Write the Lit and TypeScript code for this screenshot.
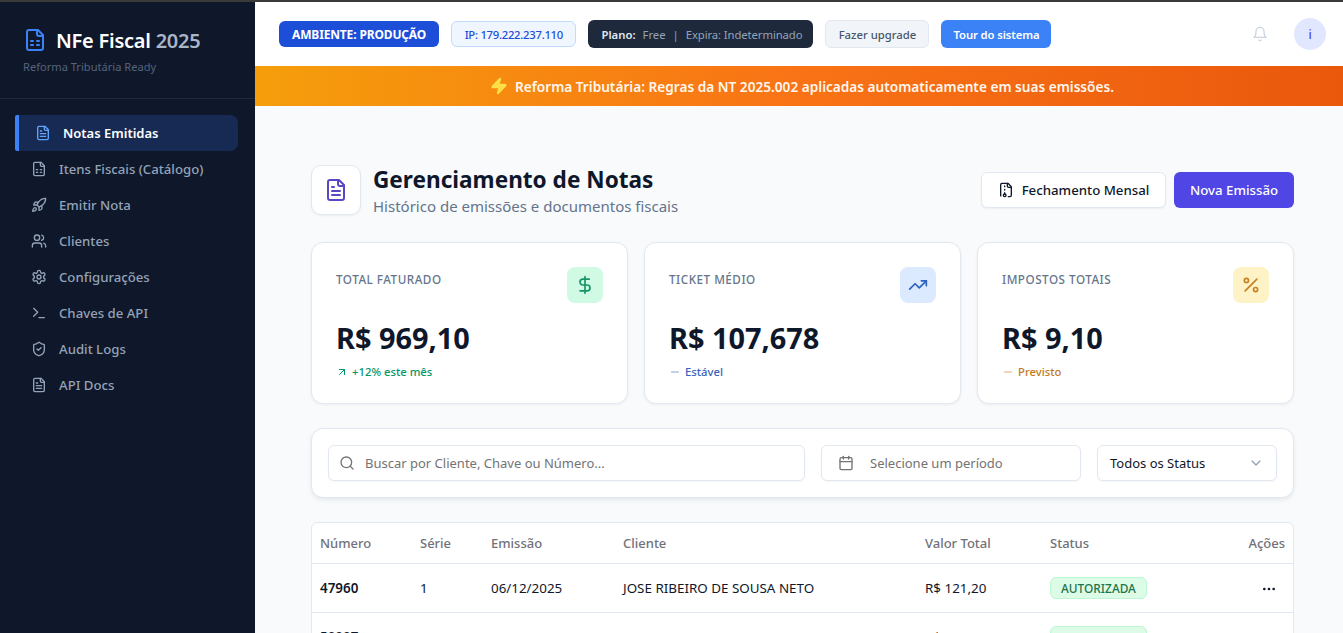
import {LitElement, css, html, svg} from 'lit';
import {customElement} from 'lit/decorators.js';

const FILE = svg`<path d="M15 2H6a2 2 0 0 0-2 2v16a2 2 0 0 0 2 2h12a2 2 0 0 0 2-2V7Z"/><path d="M14 2v4a2 2 0 0 0 2 2h4"/>`;

const ICONS = {
  fileText: svg`${FILE}<path d="M10 9H8"/><path d="M16 13H8"/><path d="M16 17H8"/>`,
  fileGrid: svg`${FILE}<path d="M8 13h2"/><path d="M14 13h2"/><path d="M8 17h2"/><path d="M14 17h2"/>`,
  fileArchive: svg`<path d="M10 12v-1"/><path d="M10 18v-2"/><path d="M10 7V6"/><path d="M14 2v4a2 2 0 0 0 2 2h4"/><path d="M15.5 22H18a2 2 0 0 0 2-2V7l-5-5H6a2 2 0 0 0-2 2v16a2 2 0 0 0 .274 1.01"/><circle cx="10" cy="20" r="2"/>`,
  rocket: svg`<path d="M4.5 16.5c-1.5 1.26-2 5-2 5s3.74-.5 5-2c.71-.84.7-2.13-.09-2.91a2.18 2.18 0 0 0-2.91-.09z"/><path d="m12 15-3-3a22 22 0 0 1 2-3.95A12.88 12.88 0 0 1 22 2c0 2.72-.78 7.5-6 11a22.35 22.35 0 0 1-4 2z"/><path d="M9 12H4s.55-3.03 2-4c1.62-1.08 5 0 5 0"/><path d="M12 15v5s3.03-.55 4-2c1.08-1.62 0-5 0-5"/>`,
  users: svg`<path d="M16 21v-2a4 4 0 0 0-4-4H6a4 4 0 0 0-4 4v2"/><circle cx="9" cy="7" r="4"/><path d="M22 21v-2a4 4 0 0 0-3-3.87"/><path d="M16 3.13a4 4 0 0 1 0 7.75"/>`,
  settings: svg`<path d="M12.22 2h-.44a2 2 0 0 0-2 2v.18a2 2 0 0 1-1 1.73l-.43.25a2 2 0 0 1-2 0l-.15-.08a2 2 0 0 0-2.73.73l-.22.38a2 2 0 0 0 .73 2.73l.15.1a2 2 0 0 1 1 1.72v.51a2 2 0 0 1-1 1.74l-.15.09a2 2 0 0 0-.73 2.73l.22.38a2 2 0 0 0 2.73.73l.15-.08a2 2 0 0 1 2 0l.43.25a2 2 0 0 1 1 1.73V20a2 2 0 0 0 2 2h.44a2 2 0 0 0 2-2v-.18a2 2 0 0 1 1-1.73l.43-.25a2 2 0 0 1 2 0l.15.08a2 2 0 0 0 2.73-.73l.22-.39a2 2 0 0 0-.73-2.73l-.15-.08a2 2 0 0 1-1-1.74v-.5a2 2 0 0 1 1-1.74l.15-.09a2 2 0 0 0 .73-2.73l-.22-.38a2 2 0 0 0-2.73-.73l-.15.08a2 2 0 0 1-2 0l-.43-.25a2 2 0 0 1-1-1.73V4a2 2 0 0 0-2-2z"/><circle cx="12" cy="12" r="3"/>`,
  terminal: svg`<polyline points="4 17 10 11 4 5"/><line x1="12" x2="20" y1="19" y2="19"/>`,
  shield: svg`<path d="M20 13c0 5-3.5 7.5-7.66 8.95a1 1 0 0 1-.67-.01C7.5 20.5 4 18 4 13V6a1 1 0 0 1 1-1c2 0 4.5-1.2 6.24-2.72a1.17 1.17 0 0 1 1.52 0C14.51 3.81 17 5 19 5a1 1 0 0 1 1 1z"/><path d="m9 12 2 2 4-4"/>`,
  bell: svg`<path d="M6 8a6 6 0 0 1 12 0c0 7 3 9 3 9H3s3-2 3-9"/><path d="M10.3 21a1.94 1.94 0 0 0 3.4 0"/>`,
  dollar: svg`<line x1="12" x2="12" y1="2" y2="22"/><path d="M17 5H9.5a3.5 3.5 0 0 0 0 7h5a3.5 3.5 0 0 1 0 7H6"/>`,
  trending: svg`<polyline points="22 7 13.5 15.5 8.5 10.5 2 17"/><polyline points="16 7 22 7 22 13"/>`,
  percent: svg`<line x1="19" x2="5" y1="5" y2="19"/><circle cx="6.5" cy="6.5" r="2.5"/><circle cx="17.5" cy="17.5" r="2.5"/>`,
  arrowUpRight: svg`<path d="M7 7h10v10"/><path d="M7 17 17 7"/>`,
  minus: svg`<path d="M5 12h14"/>`,
  search: svg`<circle cx="11" cy="11" r="8"/><path d="m21 21-4.3-4.3"/>`,
  calendar: svg`<path d="M8 2v4"/><path d="M16 2v4"/><rect width="18" height="18" x="3" y="4" rx="2"/><path d="M3 10h18"/>`,
  chevron: svg`<path d="m6 9 6 6 6-6"/>`,
  dots: svg`<circle cx="12" cy="12" r="1"/><circle cx="19" cy="12" r="1"/><circle cx="5" cy="12" r="1"/>`,
  zap: svg`<path d="M4 14a1 1 0 0 1-.78-1.63l9.9-10.2a.5.5 0 0 1 .86.46l-1.92 6.02A1 1 0 0 0 13 10h7a1 1 0 0 1 .78 1.63l-9.9 10.2a.5.5 0 0 1-.86-.46l1.92-6.02A1 1 0 0 0 11 14z"/>`,
};

type IconName = keyof typeof ICONS;

const icon = (name: IconName, cls = '') => html`
  <svg class="icon ${cls}" viewBox="0 0 24 24" fill="none" stroke="currentColor"
    stroke-width="2" stroke-linecap="round" stroke-linejoin="round">${ICONS[name]}</svg>`;

const NAV: {label: string; icon: IconName; active?: boolean}[] = [
  {label: 'Notas Emitidas', icon: 'fileText', active: true},
  {label: 'Itens Fiscais (Catálogo)', icon: 'fileGrid'},
  {label: 'Emitir Nota', icon: 'rocket'},
  {label: 'Clientes', icon: 'users'},
  {label: 'Configurações', icon: 'settings'},
  {label: 'Chaves de API', icon: 'terminal'},
  {label: 'Audit Logs', icon: 'shield'},
  {label: 'API Docs', icon: 'fileText'},
];

const STATS: {label: string; value: string; note: string; icon: IconName; noteIcon: IconName; tone: string}[] = [
  {label: 'Total Faturado', value: 'R$ 969,10', note: '+12% este mês', icon: 'dollar', noteIcon: 'arrowUpRight', tone: 'green'},
  {label: 'Ticket Médio', value: 'R$ 107,678', note: 'Estável', icon: 'trending', noteIcon: 'minus', tone: 'blue'},
  {label: 'Impostos Totais', value: 'R$ 9,10', note: 'Previsto', icon: 'percent', noteIcon: 'minus', tone: 'amber'},
];

const ROWS = [
  {num: '47960', serie: '1', date: '06/12/2025', client: 'JOSE RIBEIRO DE SOUSA NETO', total: 'R$ 121,20'},
  {num: '50007', serie: '1', date: '06/12/2025', client: 'JOSE RIBEIRO DE SOUSA NETO', total: 'R$ 70,70'},
];

@customElement('app-root')
export class AppRoot extends LitElement {
  static styles = css`
    :host {
      display: block;
      height: 100vh;
      overflow: hidden;
      font-family: 'Noto Sans', sans-serif;
      color: #0f172a;
    }

    .icon {
      width: 16px;
      height: 16px;
      flex: none;
      display: block;
    }

    .strip {
      height: 2px;
      background: #3a3a3a;
    }

    .shell {
      display: flex;
      height: calc(100vh - 2px);
    }

    /* sidebar */
    .sidebar {
      width: 255px;
      flex: none;
      background: #0f172a;
    }

    .brand {
      height: 97px;
      box-sizing: border-box;
      padding: 26px 23px 0;
      border-bottom: 1px solid #1e293b;
    }

    .brand-row {
      display: flex;
      align-items: center;
      gap: 9px;
      height: 24px;
    }

    .brand-icon {
      width: 24px;
      height: 24px;
      color: #3b82f6;
    }

    .brand-name {
      font-size: 20px;
      font-weight: 600;
      letter-spacing: -0.25px;
      color: #fff;
      white-space: nowrap;
    }

    .brand-year {
      color: #a9b6c8;
    }

    .brand-sub {
      margin-top: 7px;
      font-size: 11.1px;
      color: #566379;
      white-space: nowrap;
    }

    .nav {
      display: flex;
      flex-direction: column;
      padding: 16px 17px 0 15px;
    }

    .nav-item {
      display: flex;
      align-items: center;
      gap: 12px;
      height: 36px;
      padding-left: 16px;
      font-size: 13.2px;
      font-weight: 500;
      color: #94a3b8;
    }

    .nav-item.active {
      border-left: 4px solid #3b82f6;
      border-radius: 2px 8px 8px 2px;
      background: #172a54;
      color: #fff;
      font-size: 13px;
      font-weight: 600;
    }

    .nav-item.active .icon {
      color: #60a5fa;
    }

    /* right column */
    .content {
      flex: 1;
      min-width: 0;
      display: flex;
      flex-direction: column;
      background: #f8fafc;
    }

    .topbar {
      flex: none;
      height: 64px;
      box-sizing: border-box;
      display: flex;
      align-items: center;
      gap: 12px;
      padding: 0 17px 0 24px;
      background: #fff;
    }

    .pill {
      display: flex;
      align-items: center;
      box-sizing: border-box;
      border-radius: 6px;
      font-size: 11.3px;
      white-space: nowrap;
    }

    .env {
      height: 26px;
      padding: 0 13px;
      background: #1d4ed8;
      color: #fff;
      font-size: 12px;
      font-weight: 700;
      letter-spacing: -0.15px;
    }

    .ip {
      height: 26px;
      padding: 0 12.5px;
      background: #eff6ff;
      border: 1px solid #bfdbfe;
      color: #1d4ed8;
      font-weight: 500;
      letter-spacing: -0.28px;
    }

    .plan {
      height: 28px;
      width: 225px;
      padding: 0 0 0 13px;
      gap: 7px;
      background: #1e293b;
      color: #94a3b8;
    }

    .plan b {
      color: #e2e8f0;
      font-weight: 600;
    }

    .plan-expiry {
      letter-spacing: -0.1px;
    }

    .upgrade {
      height: 28px;
      width: 104px;
      justify-content: center;
      background: #f1f5f9;
      border: 1px solid #e2e8f0;
      color: #475569;
      font-weight: 500;
    }

    .tour {
      height: 28px;
      width: 110px;
      justify-content: center;
      background: #3b82f6;
      color: #fff;
      font-weight: 600;
      letter-spacing: -0.12px;
    }

    .top-end {
      margin-left: auto;
      display: flex;
      align-items: center;
      gap: 26px;
    }

    .bell {
      color: #cbd5e1;
    }

    .avatar {
      width: 32px;
      height: 32px;
      border-radius: 50%;
      display: flex;
      align-items: center;
      justify-content: center;
      background: #e0e7ff;
      color: #4f46e5;
      font-size: 12px;
      font-weight: 500;
    }

    .banner {
      flex: none;
      height: 40px;
      box-sizing: border-box;
      padding-left: 6px;
      display: flex;
      align-items: center;
      justify-content: center;
      gap: 7px;
      background: linear-gradient(90deg, #f59e0b, #f97316 50%, #ea580c);
      color: #fff7ed;
      font-size: 13.65px;
      font-weight: 600;
    }

    .banner .icon {
      width: 18px;
      height: 18px;
      color: #fde047;
      fill: #fde047;
    }

    .main {
      flex: 1;
      min-height: 0;
      overflow: hidden;
      padding: 59px 49px 0 56px;
    }

    .page-head {
      display: flex;
      justify-content: space-between;
      align-items: center;
      height: 50px;
    }

    .page-title {
      display: flex;
      align-items: flex-start;
      gap: 12px;
      height: 50px;
    }

    .title-icon {
      width: 50px;
      height: 50px;
      box-sizing: border-box;
      display: flex;
      align-items: center;
      justify-content: center;
      background: #fff;
      border: 1px solid #e2e8f0;
      border-radius: 10px;
      box-shadow: 0 1px 2px rgba(15, 23, 42, 0.05);
      color: #5b46c4;
    }

    .title-icon .icon {
      width: 24px;
      height: 24px;
    }

    .title-text {
      padding-top: 1px;
    }

    h1 {
      margin: 0;
      font-size: 22.6px;
      line-height: 28px;
      font-weight: 700;
      color: #0f172a;
      white-space: nowrap;
    }

    .subtitle {
      margin-top: 2px;
      font-size: 15px;
      line-height: 20px;
      color: #64748b;
      white-space: nowrap;
    }

    .head-actions {
      display: flex;
      gap: 8px;
    }

    .btn {
      display: flex;
      align-items: center;
      justify-content: center;
      gap: 8px;
      box-sizing: border-box;
      height: 36px;
      border-radius: 6px;
      font-size: 13.25px;
      font-weight: 500;
      white-space: nowrap;
    }

    .btn-light {
      width: 185px;
      background: #fff;
      border: 1px solid #e2e8f0;
      box-shadow: 0 1px 2px rgba(15, 23, 42, 0.05);
      color: #0f172a;
    }

    .btn-primary {
      width: 120px;
      background: #4f46e5;
      color: #fff;
    }

    .stats {
      display: grid;
      grid-template-columns: repeat(3, 1fr);
      gap: 16px;
      margin-top: 27px;
    }

    .stat {
      height: 162px;
      box-sizing: border-box;
      padding: 24px;
      background: #fff;
      border: 1px solid #e2e8f0;
      border-radius: 12px;
      box-shadow: 0 1px 3px rgba(15, 23, 42, 0.06);
    }

    .stat-top {
      display: flex;
      justify-content: space-between;
      align-items: flex-start;
    }

    .stat-label {
      margin-top: 3px;
      font-size: 11.7px;
      line-height: 18px;
      font-weight: 500;
      letter-spacing: 0.5px;
      text-transform: uppercase;
      color: #64748b;
    }

    .stat-icon {
      width: 36px;
      height: 36px;
      border-radius: 8px;
      display: flex;
      align-items: center;
      justify-content: center;
    }

    .stat-icon .icon {
      width: 20px;
      height: 20px;
    }

    .stat-value {
      margin-top: 15px;
      font-size: 28.9px;
      line-height: 40px;
      font-weight: 700;
      color: #0f172a;
      white-space: nowrap;
    }

    .stat-note {
      display: flex;
      align-items: center;
      gap: 4px;
      margin-top: 5px;
      font-size: 11.3px;
      line-height: 18px;
      font-weight: 500;
    }

    .stat-note .icon {
      width: 12px;
      height: 12px;
    }

    .green .stat-icon { background: #d1fae5; color: #149467; }
    .green .stat-note { color: #059669; }
    .blue .stat-icon { background: #dbeafe; color: #2f62c0; }
    .blue .stat-note { color: #3a63b8; }
    .amber .stat-icon { background: #fef3c7; color: #c97f1f; }
    .amber .stat-note { color: #c47a1e; }

    .blue .stat-note .icon,
    .amber .stat-note .icon {
      opacity: 0.6;
    }

    .filters {
      display: flex;
      gap: 16px;
      margin-top: 24px;
      padding: 16px;
      background: #fff;
      border: 1px solid #e2e8f0;
      border-radius: 12px;
      box-shadow: 0 2px 4px rgba(15, 23, 42, 0.08);
    }

    .field {
      display: flex;
      align-items: center;
      box-sizing: border-box;
      height: 36px;
      background: #fff;
      border: 1px solid #e2e8f0;
      border-radius: 6px;
      box-shadow: 0 1px 2px rgba(15, 23, 42, 0.04);
      font-size: 13px;
      color: #737373;
      white-space: nowrap;
    }

    .field-search {
      flex: 1;
      gap: 10px;
      padding-left: 10px;
    }

    .field-date {
      width: 260px;
      flex: none;
      gap: 16px;
      padding-left: 16px;
    }

    .field-select {
      width: 180px;
      flex: none;
      justify-content: space-between;
      padding: 0 12px;
      color: #0f172a;
    }

    .field-select .icon {
      color: #94a3b8;
    }

    .table-wrap {
      margin-top: 24px;
      background: #fff;
      border: 1px solid #e2e8f0;
      border-radius: 6px;
    }

    table {
      width: 100%;
      table-layout: fixed;
      border-collapse: collapse;
      font-size: 13.4px;
    }

    th,
    td {
      box-sizing: border-box;
      padding: 0 8px;
      border-bottom: 1px solid #e2e8f0;
    }

    th {
      height: 40px;
      text-align: left;
      font-size: 13px;
      font-weight: 500;
      color: #71717a;
    }

    td {
      height: 49px;
      color: #0f172a;
      white-space: nowrap;
    }

    .c-num { width: 100px; }
    .c-serie { width: 71px; }
    .c-date { width: 132px; }
    .c-client { width: 302px; }
    .c-total { width: 125px; }
    .c-actions { width: 60px; }

    .num {
      font-weight: 600;
    }

    .right {
      text-align: right;
    }

    .badge {
      display: inline-block;
      box-sizing: border-box;
      height: 22px;
      padding: 0 10px;
      line-height: 20px;
      font-size: 11.9px;
      font-weight: 500;
      color: #22734a;
      background: #dcfce7;
      border: 1px solid #bbf7d0;
      border-radius: 6px;
    }

    .more {
      display: inline-block;
      margin-right: 8px;
      vertical-align: middle;
    }
  `;

  render() {
    return html`
      <div class="strip"></div>
      <div class="shell">
        <aside class="sidebar">
          <div class="brand">
            <div class="brand-row">
              ${icon('fileGrid', 'brand-icon')}
              <span class="brand-name">NFe Fiscal <span class="brand-year">2025</span></span>
            </div>
            <div class="brand-sub">Reforma Tributária Ready</div>
          </div>
          <nav class="nav">
            ${NAV.map((item) => html`
              <div class="nav-item ${item.active ? 'active' : ''}">
                ${icon(item.icon)}<span>${item.label}</span>
              </div>
            `)}
          </nav>
        </aside>

        <div class="content">
          <header class="topbar">
            <div class="pill env">AMBIENTE: PRODUÇÃO</div>
            <div class="pill ip">IP: 179.222.237.110</div>
            <div class="pill plan"><b>Plano:</b><span>Free</span><span>|</span><span class="plan-expiry">Expira: Indeterminado</span></div>
            <div class="pill upgrade">Fazer upgrade</div>
            <div class="pill tour">Tour do sistema</div>
            <div class="top-end">
              ${icon('bell', 'bell')}
              <div class="avatar">i</div>
            </div>
          </header>

          <div class="banner">
            ${icon('zap')}
            <span>Reforma Tributária: Regras da NT 2025.002 aplicadas automaticamente em suas emissões.</span>
          </div>

          <main class="main">
            <section class="page-head">
              <div class="page-title">
                <div class="title-icon">${icon('fileText')}</div>
                <div class="title-text">
                  <h1>Gerenciamento de Notas</h1>
                  <div class="subtitle">Histórico de emissões e documentos fiscais</div>
                </div>
              </div>
              <div class="head-actions">
                <div class="btn btn-light">${icon('fileArchive')}Fechamento Mensal</div>
                <div class="btn btn-primary">Nova Emissão</div>
              </div>
            </section>

            <section class="stats">
              ${STATS.map((s) => html`
                <div class="stat ${s.tone}">
                  <div class="stat-top">
                    <div class="stat-label">${s.label}</div>
                    <div class="stat-icon">${icon(s.icon)}</div>
                  </div>
                  <div class="stat-value">${s.value}</div>
                  <div class="stat-note">${icon(s.noteIcon)}<span>${s.note}</span></div>
                </div>
              `)}
            </section>

            <section class="filters">
              <div class="field field-search">${icon('search')}<span>Buscar por Cliente, Chave ou Número...</span></div>
              <div class="field field-date">${icon('calendar')}<span>Selecione um período</span></div>
              <div class="field field-select"><span>Todos os Status</span>${icon('chevron')}</div>
            </section>

            <section class="table-wrap">
              <table>
                <thead>
                  <tr>
                    <th class="c-num">Número</th>
                    <th class="c-serie">Série</th>
                    <th class="c-date">Emissão</th>
                    <th class="c-client">Cliente</th>
                    <th class="c-total">Valor Total</th>
                    <th>Status</th>
                    <th class="c-actions right">Ações</th>
                  </tr>
                </thead>
                <tbody>
                  ${ROWS.map((r) => html`
                    <tr>
                      <td class="num">${r.num}</td>
                      <td>${r.serie}</td>
                      <td>${r.date}</td>
                      <td>${r.client}</td>
                      <td>${r.total}</td>
                      <td><span class="badge">AUTORIZADA</span></td>
                      <td class="right">${icon('dots', 'more')}</td>
                    </tr>
                  `)}
                </tbody>
              </table>
            </section>
          </main>
        </div>
      </div>
    `;
  }
}
